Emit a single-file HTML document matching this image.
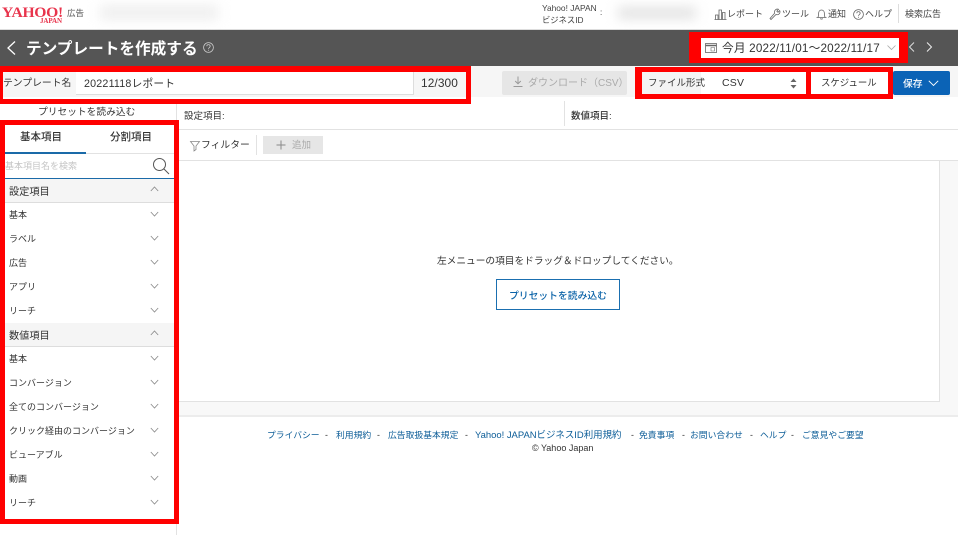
<!DOCTYPE html>
<html lang="ja"><head><meta charset="utf-8"><title>テンプレートを作成する</title>
<style>
html,body{margin:0;padding:0;background:#fff}
body{width:958px;height:535px;position:relative;overflow:hidden;font-family:"Liberation Sans","Noto Sans CJK JP",sans-serif;color:#333}
.a{position:absolute}
.t{position:absolute;white-space:nowrap;font-size:9.5px;line-height:14px;color:#333}
svg{position:absolute;overflow:visible}
.l{position:absolute;background:#e2e2e2}
.link{color:#0b5c97}
</style></head><body>

<!-- header -->
<div class="a" style="left:0;top:29px;width:958px;height:1px;background:#ddd"></div>
<div class="t" style="left:2px;top:5px;font:bold 15px/16px 'Liberation Serif',serif;color:#e8344c;letter-spacing:-.3px;transform:scaleX(1.04);transform-origin:0 0">YAHOO!</div>
<div class="t" style="left:40px;top:17px;font:bold 7px/8px 'Liberation Serif',serif;color:#e8344c;letter-spacing:-.1px">JAPAN</div>
<div class="t" style="left:67px;top:6px;font-size:8.5px;color:#555">広告</div>
<div class="a" style="left:100px;top:5px;width:118px;height:15px;background:#efefef;filter:blur(6px)"></div>
<div class="t" style="left:542px;top:2px;font-size:8.4px;line-height:12px;color:#444">Yahoo! JAPAN</div>
<div class="t" style="left:542px;top:14px;font-size:8.3px;line-height:12px;color:#444">ビジネスID</div>
<div class="t" style="left:600px;top:7px;font-size:8px;line-height:12px">:</div>
<div class="a" style="left:618px;top:7px;width:78px;height:12px;background:#e2e2e2;filter:blur(6px)"></div>

<svg style="left:714px;top:9px" width="13" height="11" fill="none" stroke="#666" stroke-width=".8"><path d="M.5 10.5h12M1.5 10.5V6h2.5v4.500M5 10.500V1h2.500v9.500M8.500 10.500V3.500H11v7"/></svg>
<div class="t" style="left:727px;top:7px;font-size:9px;color:#444">レポート</div>
<svg style="left:769px;top:8px" width="12" height="12" fill="none" stroke="#666" stroke-width=".8"><path d="M1 10.500l1 1 5-5c2 .8 4-.5 4-2.500 0-.6-.1-1-.3-1.400L9 4.300 7.800 3.200 9.500 1.300C7.500.5 5.500 2 5.500 4c0 .4 0 .8.200 1.100z"/></svg>
<div class="t" style="left:782px;top:7px;font-size:9px;color:#444">ツール</div>
<svg style="left:816px;top:8px" width="11" height="12" fill="none" stroke="#666" stroke-width=".8"><path d="M.5 9.500h10M1.800 9.500c.8-1 .8-2 .8-4 0-2 1.200-3.500 2.900-3.500s2.900 1.500 2.900 3.500c0 2 0 3 .8 4M4.300 10.500c.5.800 1.900.8 2.400 0"/></svg>
<div class="t" style="left:828px;top:7px;font-size:9px;color:#444">通知</div>
<svg style="left:853px;top:9px" width="11" height="11" fill="none" stroke="#666" stroke-width=".8"><circle cx="5.500" cy="5.500" r="4.900"/><path d="M3.800 4.300c0-2.200 3.400-2.200 3.400 0 0 1.200-1.700 1.300-1.700 2.600M5.500 7.800v.9"/></svg>
<div class="t" style="left:865px;top:7px;font-size:9px;color:#444">ヘルプ</div>
<div class="a" style="left:898px;top:4px;width:1px;height:19px;background:#ddd"></div>
<div class="t" style="left:905px;top:7px;font-size:9px;color:#444">検索広告</div>

<!-- title bar -->
<div class="a" style="left:0;top:30px;width:958px;height:36px;background:#555"></div>
<svg style="left:6px;top:41px" width="11" height="14" fill="none" stroke="#fff" stroke-width="1.300"><path d="M9 .5L2 7l7 6.500"/></svg>
<div class="t" style="left:26px;top:40px;font-size:15.650px;line-height:20px;font-weight:bold;color:#fff">テンプレートを作成する</div>
<svg style="left:203px;top:42px" width="11" height="11" fill="none" stroke="#ccc" stroke-width=".8"><circle cx="5.500" cy="5.500" r="4.900"/><path d="M3.800 4.300c0-2.200 3.400-2.200 3.400 0 0 1.200-1.700 1.300-1.700 2.600M5.500 7.800v.9"/></svg>

<div class="a" style="left:701px;top:38px;width:198px;height:20px;background:#fff"></div>
<svg style="left:705px;top:43px" width="12" height="10" fill="none" stroke="#666" stroke-width=".8"><rect x=".5" y=".5" width="11" height="9"/><path d="M.5 2.500h11" stroke-width="1.500"/><path d="M6 4.500h3.500v3.500H6z" stroke-width=".6"/></svg>
<div class="t" style="left:722px;top:42px;font-size:11.700px;color:#333;letter-spacing:.18px">今月 2022/11/01～2022/11/17</div>
<svg style="left:887px;top:45px" width="9" height="6" fill="none" stroke="#aaa" stroke-width=".8"><path d="M.5.500L4.500 4.500 8.500.500"/></svg>
<svg style="left:908px;top:42px" width="7" height="10" fill="none" stroke="#ddd" stroke-width="1"><path d="M6 .5L1.500 5 6 9.500"/></svg>
<svg style="left:926px;top:42px" width="7" height="10" fill="none" stroke="#eee" stroke-width="1"><path d="M1 .5L5.500 5 1 9.500"/></svg>

<!-- toolbar row -->
<div class="a" style="left:0;top:66px;width:958px;height:31px;background:#f6f6f6"></div>
<div class="t" style="left:3px;top:77px;font-size:9.800px;color:#333">テンプレート名</div>
<div class="a" style="left:76px;top:72px;width:338px;height:23px;background:#fff;border-bottom:1px solid #ddd;border-right:1px solid #ddd;box-sizing:border-box"></div>
<div class="t" style="left:84px;top:77px;font-size:10.700px;color:#333;letter-spacing:.2px">20221118レポート</div>
<div class="t" style="left:421px;top:76px;font-size:11.900px;color:#333;letter-spacing:.1px">12/300</div>

<div class="a" style="left:502px;top:71px;width:125px;height:24px;background:#e6e6e6;border-radius:2px"></div>
<svg style="left:513px;top:76px" width="10" height="12" fill="none" stroke="#999" stroke-width="1"><path d="M5 .5v7M2.200 5L5 7.800 7.800 5M.5 10.500h9"/></svg>
<div class="t" style="left:528px;top:77px;font-size:10px;color:#aaa">ダウンロード（CSV）</div>

<div class="a" style="left:642px;top:72px;width:164px;height:22px;background:#fff"></div>
<div class="a" style="left:642px;top:72px;width:59px;height:22px;background:#f4f4f4"></div>
<div class="t" style="left:648px;top:77px;font-size:9.500px;color:#333">ファイル形式</div>
<div class="t" style="left:722px;top:76px;font-size:10.500px;color:#333;letter-spacing:.2px">CSV</div>
<svg style="left:790px;top:78px" width="7" height="11" fill="#666"><path d="M3.500.5L6.500 4H.5zM3.500 10.500L.5 7h6z"/></svg>
<div class="a" style="left:811px;top:72px;width:77px;height:22px;background:#fff"></div>
<div class="t" style="left:821px;top:76px;font-size:9.400px;color:#333">スケジュール</div>
<div class="a" style="left:893px;top:71px;width:57px;height:24px;background:#0b63b6;border-radius:2px"></div>
<div class="t" style="left:903px;top:78px;font-size:9.800px;color:#fff;font-weight:500">保存</div>
<svg style="left:928px;top:80px" width="11" height="7" fill="none" stroke="#fff" stroke-width=".9"><path d="M.8.800L5.500 5.500 10.200.800"/></svg>

<!-- field rows -->
<div class="t" style="left:38px;top:106px;font-size:9.700px;color:#333;letter-spacing:.05px">プリセットを読み込む</div>
<div class="t" style="left:184px;top:110px;font-size:9.500px;color:#333">設定項目:</div>
<div class="l" style="left:564px;top:101px;width:1px;height:25px"></div>
<div class="t" style="left:571px;top:110px;font-size:9.500px;color:#333;font-weight:500">数値項目:</div>
<div class="l" style="left:176px;top:104px;width:1px;height:431px"></div>
<div class="l" style="left:177px;top:129px;width:781px;height:1px"></div>

<div class="a" style="left:177px;top:130px;width:781px;height:30px;background:#fff"></div>
<svg style="left:190px;top:141px" width="10" height="11" fill="none" stroke="#888" stroke-width=".8"><path d="M.5.500h9L6 5v3.500L4 10V5z"/></svg>
<div class="t" style="left:201px;top:139px;font-size:9.800px;color:#333">フィルター</div>
<div class="l" style="left:256px;top:135px;width:1px;height:20px"></div>
<div class="a" style="left:263px;top:136px;width:60px;height:18px;background:#e6e6e6"></div>
<svg style="left:276px;top:140px" width="10" height="10" stroke="#888" stroke-width="1"><path d="M5 .5v9M.5 5h9"/></svg>
<div class="t" style="left:292px;top:139px;font-size:9.500px;color:#aaa">追加</div>
<div class="l" style="left:177px;top:160px;width:781px;height:1px"></div>

<!-- main area -->
<div class="a" style="left:940px;top:161px;width:18px;height:255px;background:#f8f8f8"></div>
<div class="l" style="left:939px;top:161px;width:1px;height:241px"></div>
<div class="a" style="left:177px;top:402px;width:781px;height:13px;background:#f8f8f8"></div>
<div class="l" style="left:177px;top:401px;width:763px;height:1px"></div>
<div class="l" style="left:177px;top:415px;width:781px;height:2px;background:#ececec"></div>
<div class="t" style="left:437px;top:255px;font-size:9.700px;color:#333">左メニューの項目をドラッグ＆ドロップしてください。</div>
<div class="a" style="left:496px;top:279px;width:124px;height:31px;border:1px solid #1a6fb0;box-sizing:border-box;background:#fff"></div>
<div class="t" style="left:509px;top:290px;font-size:9.800px;font-weight:500;color:#0b63a8">プリセットを読み込む</div>

<!-- footer -->
<div class="t link" style="left:267px;top:428px;font-size:8.800px">プライバシー</div>
<div class="t" style="left:325px;top:428px;font-size:8.800px">-</div>
<div class="t link" style="left:336px;top:428px;font-size:8.800px">利用規約</div>
<div class="t" style="left:377px;top:428px;font-size:8.800px">-</div>
<div class="t link" style="left:388px;top:428px;font-size:8.800px">広告取扱基本規定</div>
<div class="t" style="left:465px;top:428px;font-size:8.800px">-</div>
<div class="t link" style="left:475px;top:429px;font-size:9.450px">Yahoo! JAPANビジネスID利用規約</div>
<div class="t" style="left:631px;top:428px;font-size:8.800px">-</div>
<div class="t link" style="left:639px;top:428px;font-size:8.800px">免責事項</div>
<div class="t" style="left:682px;top:428px;font-size:8.800px">-</div>
<div class="t link" style="left:690px;top:428px;font-size:8.800px">お問い合わせ</div>
<div class="t" style="left:750px;top:428px;font-size:8.800px">-</div>
<div class="t link" style="left:760px;top:428px;font-size:8.800px">ヘルプ</div>
<div class="t" style="left:791px;top:428px;font-size:8.800px">-</div>
<div class="t link" style="left:802px;top:428px;font-size:8.800px">ご意見やご要望</div>
<div class="t" style="left:532px;top:441px;font-size:9px;color:#333">© Yahoo Japan</div>

<!-- sidebar -->
<div class="a" style="left:5px;top:125px;width:169px;height:394px;background:#fff"></div>
<div class="t" style="left:20px;top:130px;font-size:10.500px;font-weight:500;color:#333">基本項目</div>
<div class="t" style="left:110px;top:130px;font-size:10.500px;font-weight:500;color:#333">分割項目</div>
<div class="l" style="left:86px;top:153px;width:88px;height:1px"></div>
<div class="a" style="left:5px;top:152px;width:81px;height:2px;background:#1a6aa8"></div>
<div class="t" style="left:5px;top:159px;font-size:9px;color:#c4c4c4">基本項目名を検索</div>
<svg style="left:152px;top:157px" width="18" height="18" fill="none" stroke="#555" stroke-width="1"><circle cx="7.500" cy="7.500" r="6"/><path d="M12 12l5 5"/></svg>
<div class="a" style="left:5px;top:178px;width:169px;height:1px;background:#1a6aa8"></div>

<div class="a" style="left:5px;top:179px;width:169px;height:23px;background:#f5f5f5;border-bottom:1px solid #ddd"></div>
<div class="t" style="left:9px;top:186px;font-size:10.200px;font-weight:400;color:#333">設定項目</div>
<svg style="left:150px;top:186px" width="9" height="6" fill="none" stroke="#888" stroke-width=".8"><path d="M.8 5L4.500 1 8.200 5"/></svg>
<div class="t" style="left:9px;top:208px;font-size:9px">基本</div>
<svg style="left:150px;top:211px" width="9" height="6" fill="none" stroke="#888" stroke-width=".8"><path d="M.8 1L4.500 5 8.200 1"/></svg>
<div class="t" style="left:9px;top:232px;font-size:9px">ラベル</div>
<svg style="left:150px;top:235px" width="9" height="6" fill="none" stroke="#888" stroke-width=".8"><path d="M.8 1L4.500 5 8.200 1"/></svg>
<div class="t" style="left:9px;top:256px;font-size:9px">広告</div>
<svg style="left:150px;top:259px" width="9" height="6" fill="none" stroke="#888" stroke-width=".8"><path d="M.8 1L4.500 5 8.200 1"/></svg>
<div class="t" style="left:9px;top:280px;font-size:9px">アプリ</div>
<svg style="left:150px;top:283px" width="9" height="6" fill="none" stroke="#888" stroke-width=".8"><path d="M.8 1L4.500 5 8.200 1"/></svg>
<div class="t" style="left:9px;top:304px;font-size:9px">リーチ</div>
<svg style="left:150px;top:307px" width="9" height="6" fill="none" stroke="#888" stroke-width=".8"><path d="M.8 1L4.500 5 8.200 1"/></svg>

<div class="a" style="left:5px;top:323px;width:169px;height:23px;background:#f5f5f5;border-bottom:1px solid #ddd"></div>
<div class="t" style="left:9px;top:330px;font-size:10.200px;font-weight:400;color:#333">数値項目</div>
<svg style="left:150px;top:330px" width="9" height="6" fill="none" stroke="#888" stroke-width=".8"><path d="M.8 5L4.500 1 8.200 5"/></svg>
<div class="t" style="left:9px;top:352px;font-size:9px">基本</div>
<svg style="left:150px;top:355px" width="9" height="6" fill="none" stroke="#888" stroke-width=".8"><path d="M.8 1L4.500 5 8.200 1"/></svg>
<div class="t" style="left:9px;top:376px;font-size:9px">コンバージョン</div>
<svg style="left:150px;top:379px" width="9" height="6" fill="none" stroke="#888" stroke-width=".8"><path d="M.8 1L4.500 5 8.200 1"/></svg>
<div class="t" style="left:9px;top:400px;font-size:9px">全てのコンバージョン</div>
<svg style="left:150px;top:403px" width="9" height="6" fill="none" stroke="#888" stroke-width=".8"><path d="M.8 1L4.500 5 8.200 1"/></svg>
<div class="t" style="left:9px;top:424px;font-size:9px">クリック経由のコンバージョン</div>
<svg style="left:150px;top:427px" width="9" height="6" fill="none" stroke="#888" stroke-width=".8"><path d="M.8 1L4.500 5 8.200 1"/></svg>
<div class="t" style="left:9px;top:448px;font-size:9px">ビューアブル</div>
<svg style="left:150px;top:451px" width="9" height="6" fill="none" stroke="#888" stroke-width=".8"><path d="M.8 1L4.500 5 8.200 1"/></svg>
<div class="t" style="left:9px;top:472px;font-size:9px">動画</div>
<svg style="left:150px;top:475px" width="9" height="6" fill="none" stroke="#888" stroke-width=".8"><path d="M.8 1L4.500 5 8.200 1"/></svg>
<div class="t" style="left:9px;top:496px;font-size:9px">リーチ</div>
<svg style="left:150px;top:499px" width="9" height="6" fill="none" stroke="#888" stroke-width=".8"><path d="M.8 1L4.500 5 8.200 1"/></svg>

<!-- red annotation boxes -->
<div class="a" style="left:0;top:120px;width:179px;height:404px;border:5px solid #f00;box-sizing:border-box"></div>
<div class="a" style="left:0;top:66px;width:471px;height:38px;border:solid #f00;border-width:6px 5px 5px 3px;box-sizing:border-box"></div>
<div class="a" style="left:689px;top:32px;width:219px;height:31px;border:solid #f00;border-width:6px 9px 5px 12px;box-sizing:border-box"></div>
<div class="a" style="left:635px;top:67px;width:176px;height:32px;border:solid #f00;border-width:5px 5px 5px 7px;box-sizing:border-box"></div>
<div class="a" style="left:806px;top:67px;width:87px;height:32px;border:solid #f00;border-width:5px 5px 5px 5px;box-sizing:border-box"></div>
</body></html>
